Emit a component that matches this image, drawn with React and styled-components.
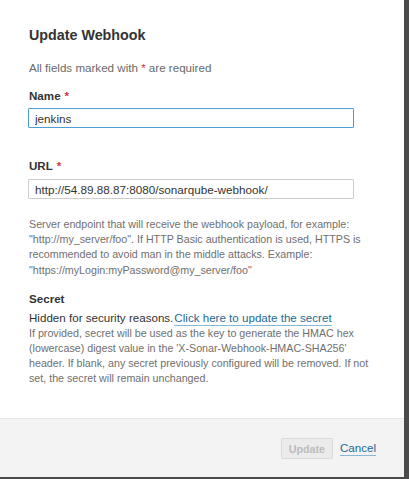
import React from "react";
import styled, { createGlobalStyle } from "styled-components";

const Global = createGlobalStyle`
  html, body { margin: 0; padding: 0; }
  body {
    background: #4b4b4b;
    font-family: "Liberation Sans", Arial, sans-serif;
    overflow: hidden;
  }
`;

const Modal = styled.div`
  width: 404px;
  height: 477px;
  background: #fff;
  display: flex;
  flex-direction: column;
  box-sizing: border-box;
`;

const Body = styled.div`
  padding: 25px 0 0 28px;
  flex: 1;
  display: flex;
  flex-direction: column;
`;

const Title = styled.h2`
  margin: 0;
  font-size: 14.3px;
  line-height: 20px;
  font-weight: bold;
  color: #333;
  padding-left: 1px;
`;

const Note = styled.p`
  margin: 15px 0 0;
  font-size: 11.6px;
  line-height: 16px;
  color: #6a6a6a;
  padding-left: 1px;
`;

const Field = styled.div`
  display: flex;
  flex-direction: column;
  margin-top: ${(p) => p.$mt}px;
`;

const Label = styled.label`
  font-size: 11.6px;
  line-height: 16px;
  font-weight: bold;
  color: #333;
  padding-left: 1px;
`;

const Req = styled.span`
  color: #d4333f;
  margin-left: ${(p) => (p.$inline ? 0 : 4)}px;
`;

const Input = styled.input`
  box-sizing: border-box;
  width: 326px;
  height: 20px;
  margin-top: ${(p) => p.$mt}px;
  padding: 0 6px;
  border: 1px solid ${(p) => (p.$focus ? "#4b9fd5" : "#cdcdcd")};
  border-radius: 1px;
  font-family: "Liberation Sans", Arial, sans-serif;
  font-size: 11.7px;
  color: #333;
  outline: none;
  background: #fff;
`;

const Help = styled.div`
  margin-top: ${(p) => p.$mt}px;
  width: 340px;
  font-size: 10.7px;
  line-height: 15.2px;
  color: #6f6f6f;
  padding-left: 1px;
`;

const Line = styled.div`
  white-space: nowrap;
`;

const Hidden = styled.div`
  margin-top: 3px;
  font-size: 11.6px;
  line-height: 16px;
  color: #333;
  padding-left: 1px;
  white-space: nowrap;
`;

const LinkBtn = styled.a`
  color: #236a97;
  border-bottom: 1px solid #86b8da;
  margin-left: ${(p) => (p.$ml !== undefined ? p.$ml : 2)}px;
  cursor: pointer;
  font-size: 11.6px;
  line-height: 14px;
  display: inline-block;
`;

const Footer = styled.div`
  height: 59px;
  box-sizing: border-box;
  background: #f3f3f3;
  border-top: 1px solid #e6e6e6;
  display: flex;
  align-items: center;
  justify-content: flex-end;
  padding: 1px 28px 0 0;
  gap: 7px;
`;

const Button = styled.button`
  height: 21px;
  box-sizing: border-box;
  padding: 0 7px;
  background: #ebebeb;
  border: 1px solid #dadada;
  border-radius: 2px;
  color: #bcbcbc;
  font-family: "Liberation Sans", Arial, sans-serif;
  font-size: 10.7px;
  font-weight: bold;
`;

export default function App() {
  return (
    <>
      <Global />
      <Modal>
        <Body>
          <Title>Update Webhook</Title>
          <Note>
            All fields marked with <Req $inline>*</Req> are required
          </Note>
          <Field $mt={12}>
            <Label>
              Name<Req>*</Req>
            </Label>
            <Input $mt={4} $focus defaultValue="jenkins" readOnly />
          </Field>
          <Field $mt={30}>
            <Label>
              URL<Req>*</Req>
            </Label>
            <Input $mt={5} defaultValue="http://54.89.88.87:8080/sonarqube-webhook/" readOnly />
            <Help $mt={18}>
              <Line>Server endpoint that will receive the webhook payload, for example:</Line>
              <Line>"http://my_server/foo". If HTTP Basic authentication is used, HTTPS is</Line>
              <Line>recommended to avoid man in the middle attacks. Example:</Line>
              <Line>"https://myLogin:myPassword@my_server/foo"</Line>
            </Help>
          </Field>
          <Field $mt={13}>
            <Label>Secret</Label>
            <Hidden>
              Hidden for security reasons.
              <LinkBtn $ml={1}>Click here to update the secret</LinkBtn>
            </Hidden>
            <Help $mt={0}>
              <Line>If provided, secret will be used as the key to generate the HMAC hex</Line>
              <Line>(lowercase) digest value in the 'X-Sonar-Webhook-HMAC-SHA256'</Line>
              <Line>header. If blank, any secret previously configured will be removed. If not</Line>
              <Line>set, the secret will remain unchanged.</Line>
            </Help>
          </Field>
        </Body>
        <Footer>
          <Button disabled>Update</Button>
          <LinkBtn $ml={0}>Cancel</LinkBtn>
        </Footer>
      </Modal>
    </>
  );
}
